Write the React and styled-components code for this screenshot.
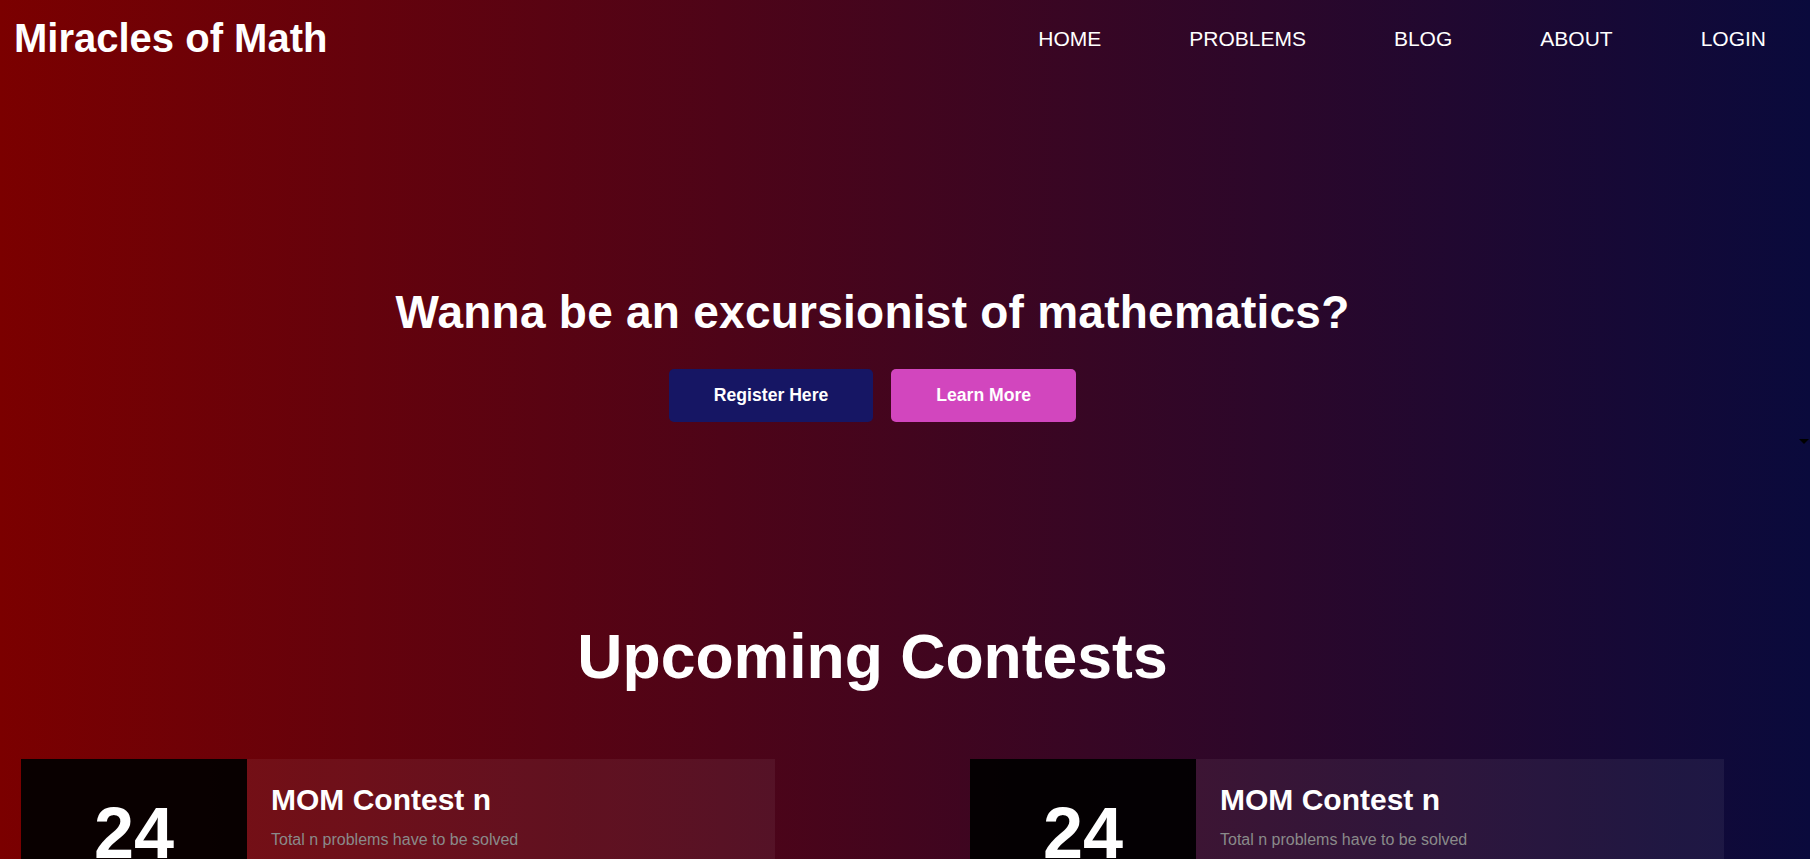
import styled, { createGlobalStyle } from 'styled-components'

const GlobalStyle = createGlobalStyle`
  html {
    scrollbar-width: none;
  }
  html::-webkit-scrollbar {
    display: none;
  }
  body {
    margin: 0;
    min-height: 100vh;
    font-family: 'Liberation Sans', Arial, sans-serif;
    color: #ffffff;
    background: linear-gradient(to right, #7b0000, #0a0a3c);
  }
`

const navItems = ['HOME', 'PROBLEMS', 'BLOG', 'ABOUT', 'LOGIN']

const contests = [
  { day: '24', month: 'MAR', title: 'MOM Contest n', info: 'Total n problems have to be solved' },
  { day: '24', month: 'MAR', title: 'MOM Contest n', info: 'Total n problems have to be solved' },
]

export default function App() {
  return (
    <>
      <GlobalStyle />
      <Page>
        <Header>
          <Logo>Miracles of Math</Logo>
          <Nav>
            {navItems.map((item) => (
              <NavLink key={item} href="#">
                {item}
              </NavLink>
            ))}
          </Nav>
        </Header>
        <Caret />
        <Main>
          <Hero>
            <HeroTitle>Wanna be an excursionist of mathematics?</HeroTitle>
            <ButtonRow>
              <ActionButton $bg="#161664">Register Here</ActionButton>
              <ActionButton $bg="#d246be">Learn More</ActionButton>
            </ButtonRow>
          </Hero>
          <Contests>
            <SectionTitle>Upcoming Contests</SectionTitle>
            <CardList>
              {contests.map((c, i) => (
                <Card key={i}>
                  <DateBox>
                    <Day>{c.day}</Day>
                    <Month>{c.month}</Month>
                  </DateBox>
                  <CardBody>
                    <CardTitle>{c.title}</CardTitle>
                    <CardInfo>{c.info}</CardInfo>
                  </CardBody>
                </Card>
              ))}
            </CardList>
          </Contests>
        </Main>
      </Page>
    </>
  )
}

const Page = styled.div`
  position: relative;
  min-height: 100vh;
`

const Header = styled.header`
  height: 77px;
  display: flex;
  align-items: center;
  justify-content: space-between;
  padding-left: 14px;
`

const Logo = styled.div`
  font-size: 40px;
  font-weight: 700;
`

const Nav = styled.nav`
  display: flex;
`

const NavLink = styled.a`
  padding: 0 44px;
  font-size: 21px;
  color: #ffffff;
  text-decoration: none;
`

const Caret = styled.span`
  position: absolute;
  top: 439px;
  right: 1px;
  width: 0;
  height: 0;
  border-left: 5px solid transparent;
  border-right: 5px solid transparent;
  border-top: 5px solid #000000;
`

const Main = styled.main`
  width: 1745px;
`

const Hero = styled.section`
  padding-top: 208px;
  display: flex;
  flex-direction: column;
  align-items: center;
`

const HeroTitle = styled.h1`
  margin: 0;
  font-size: 46px;
  line-height: 55px;
  font-weight: 700;
  letter-spacing: 0.25px;
`

const ButtonRow = styled.div`
  margin-top: 29px;
  display: flex;
  gap: 18px;
`

const ActionButton = styled.button`
  border: none;
  border-radius: 5px;
  padding: 16px 45px;
  background: ${({ $bg }) => $bg};
  color: #ffffff;
  font-family: 'Liberation Sans', Arial, sans-serif;
  font-size: 17.6px;
  line-height: 21px;
  font-weight: 700;
  cursor: pointer;
`

const Contests = styled.section`
  margin-top: 197px;
`

const SectionTitle = styled.h2`
  margin: 0;
  text-align: center;
  font-size: 62.5px;
  line-height: 74px;
  font-weight: 700;
`

const CardList = styled.div`
  margin-top: 66px;
  padding: 0 21px;
  display: flex;
  justify-content: space-between;
`

const Card = styled.div`
  width: 754px;
  height: 200px;
  display: flex;
`

const DateBox = styled.div`
  width: 226px;
  flex-shrink: 0;
  padding-top: 38px;
  background: rgba(0, 0, 0, 0.92);
  display: flex;
  flex-direction: column;
  align-items: center;
`

const Day = styled.div`
  font-size: 72px;
  line-height: 72px;
  font-weight: 700;
`

const Month = styled.div`
  margin-top: 8px;
  font-size: 22px;
  letter-spacing: 2px;
`

const CardBody = styled.div`
  flex: 1;
  padding: 24px;
  background: rgba(255, 255, 255, 0.06);
`

const CardTitle = styled.h3`
  margin: 0 0 14px;
  font-size: 30px;
  font-weight: 700;
`

const CardInfo = styled.p`
  margin: 0;
  font-size: 16px;
  color: #8a8a8a;
`
